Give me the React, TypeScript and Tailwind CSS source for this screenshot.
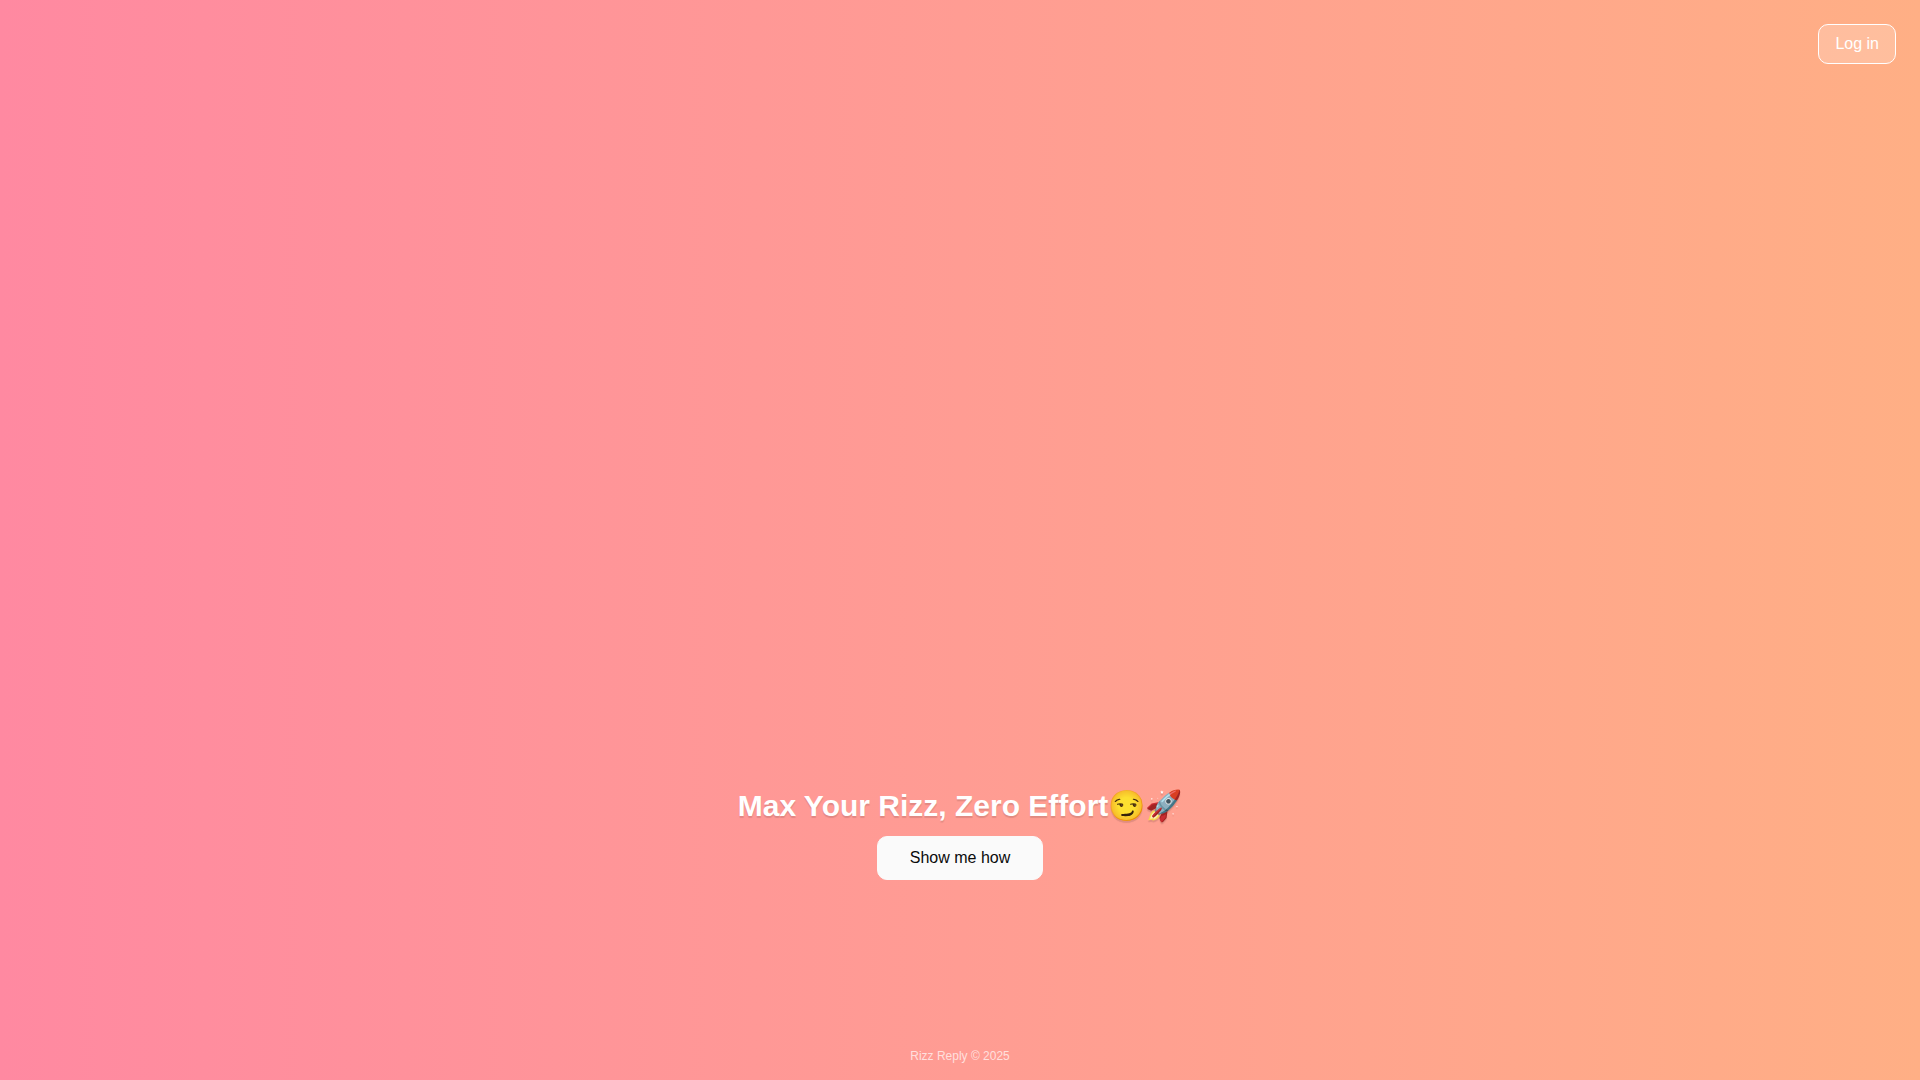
export default function App() {
  return (
    <div className="flex min-h-screen flex-col bg-linear-to-r/srgb from-[#ff89a1] to-[#ffaf85] font-['Liberation_Sans',Arial,sans-serif]">
      <header className="flex justify-end p-6">
        <button
          type="button"
          className="h-10 rounded-[10px] border border-white bg-white/20 px-4 text-base font-medium text-white"
        >
          Log in
        </button>
      </header>

      <main className="flex flex-1 flex-col items-center justify-end gap-3 pb-[168px]">
        <h1 className="text-center text-3xl font-bold text-white text-shadow-[0_2px_1px_rgb(0_0_0/0.12)]">
          Max Your Rizz, Zero Effort😏🚀
        </h1>
        <button
          type="button"
          className="h-11 rounded-[10px] border border-[#fafafa] bg-[#fafafa] px-8 text-base font-medium text-neutral-950"
        >
          Show me how
        </button>
      </main>

      <footer className="pb-4 text-center text-xs text-white/70">Rizz Reply © 2025</footer>
    </div>
  )
}
